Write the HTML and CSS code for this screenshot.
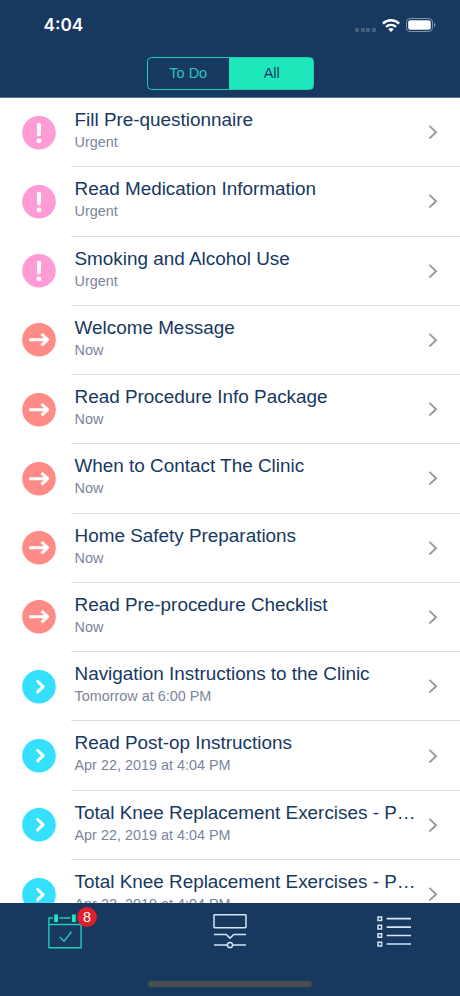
FILE: index.html
```
<!DOCTYPE html>
<html lang="en">
<head>
<meta charset="utf-8">
<title>Tasks</title>
<link rel="stylesheet" href="styles.css">
</head>
<body>
<svg class="defs" width="0" height="0" aria-hidden="true">
  <symbol id="urgent" viewBox="0 0 34 34"><circle cx="17" cy="16.7" r="16.8" fill="#ff9bd7"/><path d="M14.9 8.6a2.1 1.9 0 0 1 4.2 0l-.4 11.2q-1.7 1.4-3.4 0z" fill="#fff"/><circle cx="17" cy="24.8" r="2.4" fill="#fff"/></symbol>
  <symbol id="now" viewBox="0 0 34 34"><circle cx="17" cy="16.7" r="16.8" fill="#ff8b86"/><path d="M7.2 16.7H25M19.6 11l6 5.7-6 5.7" fill="none" stroke="#fff" stroke-width="3.1" stroke-linejoin="round"/></symbol>
  <symbol id="later" viewBox="0 0 34 34"><circle cx="17" cy="16.7" r="16.8" fill="#35e0ff"/><path d="M15.7 11.5l5.4 5.2-5.4 5.2" fill="none" stroke="#fff" stroke-width="3.1" stroke-linecap="round" stroke-linejoin="round"/></symbol>
  <symbol id="chevron" viewBox="0 0 10 14"><path d="M1.4 .9l6.7 6.3-6.7 6.3" fill="none" stroke="#999a9e" stroke-width="1.9"/></symbol>
</svg>
<div class="app">
  <header class="header">
    <div class="status">
      <span class="time">4:04</span>
      <span class="signal"><i></i><i></i><i></i><i></i></span>
      <svg class="wifi" width="18" height="13" viewBox="0 0 18 13"><g fill="none" stroke="#fff" stroke-width="2.4"><path d="M.9 4.6a11.6 11.6 0 0 1 16.2 0"/><path d="M4 7.9a7.2 7.2 0 0 1 10 0"/></g><path d="M6.3 10.2a4 4 0 0 1 5.4 0L9 13z" fill="#fff"/></svg>
      <svg class="battery" width="30" height="14" viewBox="0 0 30 14"><rect x=".5" y=".5" width="26" height="13" rx="3.6" fill="none" stroke="#7f93ad"/><rect x="2.2" y="2.2" width="22.6" height="9.6" rx="2" fill="#fff"/><path d="M28 4.8q1.6 .8 1.6 2.2t-1.6 2.2z" fill="#7f93ad"/></svg>
    </div>
    <div class="segments"><span class="segment">To Do</span><span class="segment active">All</span></div>
  </header>
  <main class="list">
    <div class="row"><svg class="icon"><use href="#urgent"/></svg><div class="body"><div class="text"><div class="title">Fill Pre-questionnaire</div><div class="sub">Urgent</div></div><svg class="chevron"><use href="#chevron"/></svg></div></div>
    <div class="row"><svg class="icon"><use href="#urgent"/></svg><div class="body"><div class="text"><div class="title">Read Medication Information</div><div class="sub">Urgent</div></div><svg class="chevron"><use href="#chevron"/></svg></div></div>
    <div class="row"><svg class="icon"><use href="#urgent"/></svg><div class="body"><div class="text"><div class="title">Smoking and Alcohol Use</div><div class="sub">Urgent</div></div><svg class="chevron"><use href="#chevron"/></svg></div></div>
    <div class="row"><svg class="icon"><use href="#now"/></svg><div class="body"><div class="text"><div class="title">Welcome Message</div><div class="sub">Now</div></div><svg class="chevron"><use href="#chevron"/></svg></div></div>
    <div class="row"><svg class="icon"><use href="#now"/></svg><div class="body"><div class="text"><div class="title">Read Procedure Info Package</div><div class="sub">Now</div></div><svg class="chevron"><use href="#chevron"/></svg></div></div>
    <div class="row"><svg class="icon"><use href="#now"/></svg><div class="body"><div class="text"><div class="title">When to Contact The Clinic</div><div class="sub">Now</div></div><svg class="chevron"><use href="#chevron"/></svg></div></div>
    <div class="row"><svg class="icon"><use href="#now"/></svg><div class="body"><div class="text"><div class="title">Home Safety Preparations</div><div class="sub">Now</div></div><svg class="chevron"><use href="#chevron"/></svg></div></div>
    <div class="row"><svg class="icon"><use href="#now"/></svg><div class="body"><div class="text"><div class="title">Read Pre-procedure Checklist</div><div class="sub">Now</div></div><svg class="chevron"><use href="#chevron"/></svg></div></div>
    <div class="row"><svg class="icon"><use href="#later"/></svg><div class="body"><div class="text"><div class="title">Navigation Instructions to the Clinic</div><div class="sub">Tomorrow at 6:00 PM</div></div><svg class="chevron"><use href="#chevron"/></svg></div></div>
    <div class="row"><svg class="icon"><use href="#later"/></svg><div class="body"><div class="text"><div class="title">Read Post-op Instructions</div><div class="sub">Apr 22, 2019 at 4:04 PM</div></div><svg class="chevron"><use href="#chevron"/></svg></div></div>
    <div class="row"><svg class="icon"><use href="#later"/></svg><div class="body"><div class="text"><div class="title">Total Knee Replacement Exercises - P…</div><div class="sub">Apr 22, 2019 at 4:04 PM</div></div><svg class="chevron"><use href="#chevron"/></svg></div></div>
    <div class="row"><svg class="icon"><use href="#later"/></svg><div class="body"><div class="text"><div class="title">Total Knee Replacement Exercises - P…</div><div class="sub">Apr 22, 2019 at 4:04 PM</div></div><svg class="chevron"><use href="#chevron"/></svg></div></div>
  </main>
  <footer class="tabs">
    <div class="tab-row">
      <div class="tab calendar">
        <svg width="34" height="36" viewBox="0 0 34 36"><g fill="none" stroke="#20cdb5" stroke-width="1.4"><path d="M5 5H.9v29.8h32.2V11.5H.9M11.5 5h11M33.1 11.5V8"/><path d="M11.7 24.1l4.3 4.1 7.5-9.4"/></g><path d="M6.2 1.5H10V9H6.2zM24 1.5h3.8V9H24z" fill="#1ee8bf"/></svg>
        <span class="badge">8</span>
      </div>
      <div class="tab">
        <svg width="34" height="36" viewBox="0 0 34 36"><g fill="none" stroke="#d3e5f8" stroke-width="1.5"><rect x="1" y="1.7" width="32" height="13" rx=".6"/><path d="M1 21.4h12.2l3.8 3.7 3.8-3.7H33M1 32h13.4M19.6 32H33"/><circle cx="17" cy="32" r="2.6"/></g></svg>
      </div>
      <div class="tab">
        <svg width="34" height="36" viewBox="0 0 34 36"><g fill="none" stroke="#d3e5f8" stroke-width="1.5"><path d="M1 3.9h3.6v3.6H1zM1 12.3h3.6v3.6H1zM1 20.7h3.6v3.6H1zM1 29.3h3.6v3.6H1z"/><path d="M9.6 5.7H34M9.6 14.1H34M9.6 22.5H34M9.6 31H34" stroke-width="1.7"/></g></svg>
      </div>
    </div>
    <div class="home-bar"></div>
  </footer>
</div>
</body>
</html>
```
FILE: styles.css
```
* { box-sizing: border-box; }
body { margin: 0; background: #fff; font-family: "Liberation Sans", Arial, sans-serif; }
.defs { position: absolute; }
.app { width: 460px; height: 996px; display: flex; flex-direction: column; overflow: hidden; }
.header { flex: none; height: 98px; background: #17385f; border-bottom: 1px solid #5f7690; display: flex; flex-direction: column; align-items: center; }
.status { width: 100%; height: 57px; padding: 0 24px 7px 43.5px; display: flex; align-items: center; }
.time { flex: 1; color: #fff; font: 600 17.2px/20px Inter, sans-serif; }
.signal { display: flex; gap: 1.7px; margin: 9px 6px 0 0; }
.signal i { width: 4px; height: 4px; border-radius: 1px; background: #46617f; }
.wifi { margin-right: 6px; }
.segments { width: 167px; height: 33px; display: flex; border: 1px solid #1ecdb2; border-radius: 4.5px; overflow: hidden; background: linear-gradient(90deg, transparent 50%, #1ee8bb 50%) border-box; }
.segment { flex: 1; color: #25c6bd; font-size: 14.5px; line-height: 31px; text-align: center; padding-right: 1px; }
.segment.active { background: #1ee8bb; color: #17385f; box-shadow: 0 0 0 1px #1ee8bb; padding: 0 0 0 1px; }
.list { flex: 1; min-height: 0; overflow: hidden; }
.row { height: 69.27px; display: flex; align-items: stretch; padding-left: 22px; }
.icon { width: 34px; height: 34px; flex: none; align-self: center; margin-right: 15px; overflow: visible; }
.icon use { overflow: visible; }
.body { flex: 1; min-width: 0; display: flex; align-items: center; justify-content: space-between; border-bottom: 1px solid #dededf; padding: 0 22px 0 3.5px; }
.text { align-self: flex-start; padding-top: 11px; white-space: nowrap; }
.title { color: #17385f; font-size: 18.9px; line-height: 22px; }
.sub { color: #7a859a; font-size: 14.4px; line-height: 18px; margin-top: 2px; }
.chevron { width: 10px; height: 14px; flex: none; }
.tabs { flex: none; height: 93px; background: #17385f; display: flex; flex-direction: column; align-items: center; justify-content: space-between; padding: 10px 0 9px; }
.tab-row { width: 100%; display: flex; justify-content: space-between; padding: 0 49px 0 48px; }
.tab { position: relative; height: 36px; }
.badge { position: absolute; left: 29px; top: -6px; width: 20px; height: 20px; border-radius: 50%; background: #dc1f2b; color: #fff; font-size: 14.5px; line-height: 20px; text-align: center; }
.home-bar { width: 164px; height: 6px; border-radius: 3px; background: #4b4d51; }
```
